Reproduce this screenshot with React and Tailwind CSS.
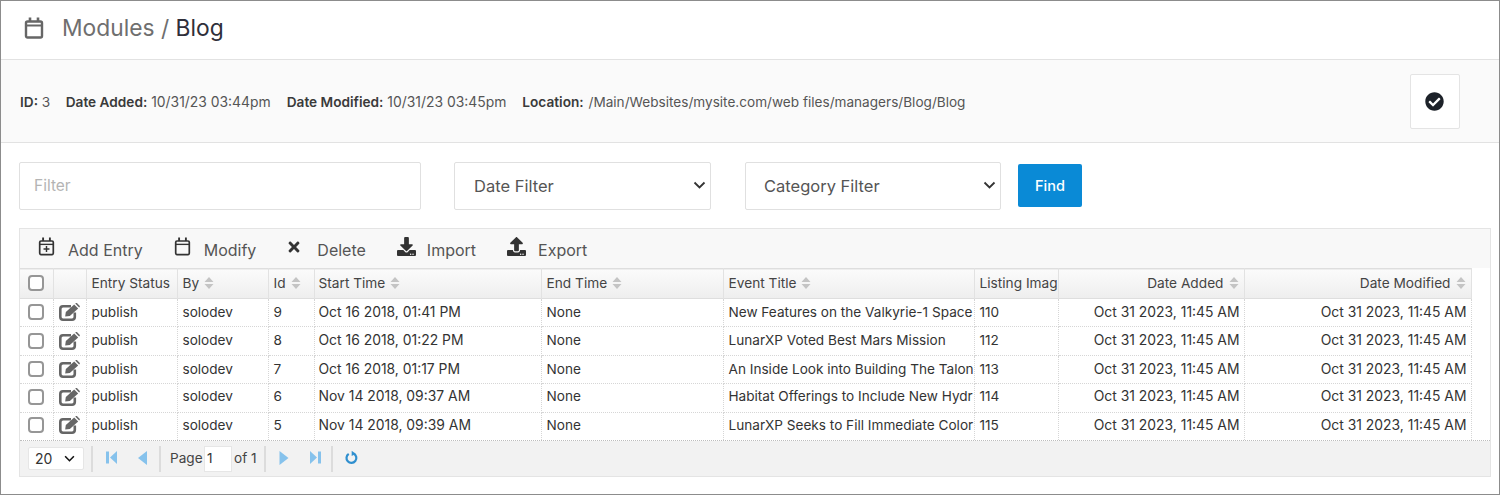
import React from "react";
import { FaCheckCircle, FaTimes, FaDownload, FaUpload } from "react-icons/fa";

const Cal = ({ plus, className, sw = 2.4 }) => (
  <svg viewBox="0 0 20 22" className={className} fill="none" stroke="currentColor" strokeWidth={sw}>
    <rect x="2" y="4.5" width="16" height="16" rx="1.5" />
    <path d="M2 8.5h16" strokeWidth={sw - 0.4} />
    <path d="M6 0.5v4M14 0.5v4" strokeWidth={sw + 0.2} />
    {plus && <path d="M10 10.5v7M6.5 14h7" strokeWidth="1.7" />}
  </svg>
);

const EditIcon = () => (
  <svg viewBox="0 0 21 18" className="w-[21px] h-[18px] block text-[#666]" fill="currentColor">
    <path d="M12 3.2H4A2.8 2.8 0 0 0 1.3 6V14A2.8 2.8 0 0 0 4 16.7h9a2.8 2.8 0 0 0 2.8-2.7V9.5" fill="none" stroke="currentColor" strokeWidth="2.6" />
    <path d="M6.2 13.4l.6-4.4 8.4-7.6 4 4-8.4 7.6z" />
    <path d="M16.2.6l.9-.6h.8l2.9 2.9v.8l-.7.8z" />
  </svg>
);

const Sort = () => (
  <svg viewBox="0 0 10 12" className="w-[10px] h-[12px] inline-block ml-[5px] align-[-1px] text-[#c4c4c4]" fill="currentColor">
    <path d="M5 0l4.5 5h-9zM5 12L.5 7h9z" />
  </svg>
);

const Chevron = ({ cls = "w-[13px] h-[8px] -mt-[1px] text-[#333]" }) => (
  <svg viewBox="0 0 12 8" className={cls} fill="none" stroke="currentColor" strokeWidth="1.8">
    <path d="M1 1.5l5 5 5-5" />
  </svg>
);

const Box = () => <span className="block w-4 h-4 border-2 border-[#969696] rounded-[4px] bg-white mx-auto" />;

const Sep = ({ ml }) => <span className={`w-[2px] h-[26px] bg-[#dcdcdc] ${ml}`} />;

const First = ({ flip, ml }) => (
  <svg viewBox="0 0 11 13" className={`w-[11px] h-[13px] -mt-[2px] text-[#86c2ec] ${ml} ${flip ? "-scale-x-100" : ""}`} fill="currentColor">
    <rect x="0" y="0.5" width="3" height="12" />
    <path d="M11 0v13L4 6.5z" />
  </svg>
);
const Prev = ({ flip, ml, w = "w-[9px]" }) => (
  <svg viewBox="0 0 9 14" className={`${w} h-[14px] -mt-[2px] text-[#86c2ec] ${ml} ${flip ? "-scale-x-100" : ""}`} fill="currentColor">
    <path d="M9 0v14L0 7z" />
  </svg>
);
const Refresh = ({ ml }) => (
  <svg viewBox="0 0 14 15" className={`w-[13px] h-[15px] -mt-[2px] text-[#2f8fcf] ${ml}`} fill="none" stroke="currentColor" strokeWidth="2.4">
    <path d="M9.5 3.4A5.3 5.3 0 1 1 4 3.6" />
    <path d="M7.2 0.2L11.6 3.4 7.2 5.8z" fill="currentColor" stroke="none" />
  </svg>
);

const cols = [33, 33, 91, 91, 46, 227, 182, 251, 84, 186, 227];
const heads = [
  ["Entry Status", false, ""],
  ["By", true, ""],
  ["Id", true, ""],
  ["Start Time", true, "!pl-[4px]"],
  ["End Time", true, ""],
  ["Event Title", true, ""],
  ["Listing Imag", false, ""],
];
const rows = [
  ["9", "Oct 16 2018, 01:41 PM", "New Features on the Valkyrie-1 Space", "110", "h-[28px]", "pb-[1px]"],
  ["8", "Oct 16 2018, 01:22 PM", "LunarXP Voted Best Mars Mission", "112", "h-[29px]", "pb-[1px]"],
  ["7", "Oct 16 2018, 01:17 PM", "An Inside Look into Building The Talon", "113", "h-[28px]", "pb-[1px]"],
  ["6", "Nov 14 2018, 09:37 AM", "Habitat Offerings to Include New Hydr", "114", "h-[29px]", "pb-[3px]"],
  ["5", "Nov 14 2018, 09:39 AM", "LunarXP Seeks to Fill Immediate Color", "115", "h-[29px]", "pb-[4px]"],
];
const hCell = "border-r border-[#e2e2e2] px-[5px] pb-[1px] font-normal text-left whitespace-nowrap overflow-hidden";
const cell = "border-r border-b border-dotted border-[#d6d6d6] px-[5px] whitespace-nowrap overflow-hidden";
const dateCell = "text-right text-[13.9px] !pr-[4px]";

const Action = ({ icon, label, gap, ml }) => (
  <div className={`flex items-center ${gap} ${ml}`}>
    {icon}
    <span className="text-[16px] leading-none text-[#555] mt-[3px]">{label}</span>
  </div>
);

const Select = ({ label, w, pl }) => (
  <div className={`${w} ${pl} h-[48px] border border-[#e0e0e0] rounded-[2px] bg-white flex items-center justify-between pr-[3px] text-[16.5px] text-[#555]`}>
    <span className="mt-[1px]">{label}</span>
    <span className="mr-[1px] flex"><Chevron /></span>
  </div>
);

const D = ({ children }) => <span className="text-[13.9px]">{children}</span>;
const B = ({ children, ml }) => <b className={`font-semibold text-[#3a3a3a] ${ml}`}>{children}</b>;

export default function App() {
  return (
    <div className="w-[1500px] h-[495px] border border-[#8c8c8c] bg-white overflow-hidden font-['Inter',sans-serif] text-[#333]">
      <header className="h-[59px] border-b border-[#e2e2e2] flex items-center pl-[23px] pb-[5px]">
        <Cal className="w-[20px] h-[22px] text-[#666]" />
        <h1 className="ml-[18px] mt-[2px] text-[22.8px] leading-none text-[#6f6f6f]">
          Modules / <span className="text-[#2f2f3a]">Blog</span>
        </h1>
      </header>

      <section className="h-[83px] bg-[#fafafa] border-b border-[#e2e2e2] flex items-center pl-[19px] text-[13.65px] text-[#555]">
        <p className="mt-[2px]">
          <B>ID:</B> 3
          <B ml="ml-[15.5px]">Date Added:</B> <D>10/31/23 03:44pm</D>
          <B ml="ml-[16px]">Date Modified:</B> <D>10/31/23 03:45pm</D>
          <B ml="ml-[16px]">Location:</B> <span className="text-[13.6px] ml-[1px]">/Main/Websites/mysite.com/web files/managers/Blog/Blog</span>
        </p>
        <div className="ml-auto mr-[39px] w-[50px] h-[55px] bg-white border border-[#e4e4e4] rounded-[2px] flex items-center justify-center">
          <FaCheckCircle className="text-[19px] text-[#1d2229] -ml-[1px]" />
        </div>
      </section>

      <div className="flex items-center h-[85px] pl-[18px]">
        <div className="w-[402px] h-[48px] border border-[#e0e0e0] rounded-[2px] flex items-center pl-[14px] text-[15.5px] text-[#b4b4b4]"><span className="mt-[1px]">Filter</span></div>
        <div className="ml-[33px]"><Select label="Date Filter" w="w-[257px]" pl="pl-[19px]" /></div>
        <div className="ml-[34px]"><Select label="Category Filter" w="w-[256px]" pl="pl-[18px]" /></div>
        <button className="ml-[17px] w-[64px] h-[43px] bg-[#0a8ad6] rounded-[2px] text-white text-[14.5px] font-medium">Find</button>
      </div>

      <div className="ml-[18px] w-[1472px] border border-[#e4e4e4]">
        <div className="h-[39px] bg-[#f8f8f8] flex items-center pl-[18px]">
          <Action icon={<Cal plus sw={2} className="w-[17px] h-[19px] text-[#333] -mt-[4px]" />} label="Add Entry" gap="gap-[13px]" ml="" />
          <Action icon={<Cal sw={2} className="w-[17px] h-[19px] text-[#333] -mt-[4px]" />} label="Modify" gap="gap-[13px]" ml="ml-[31px]" />
          <Action icon={<FaTimes className="text-[16px] text-[#333] -mt-[4px]" />} label="Delete" gap="gap-[15px]" ml="ml-[30px]" />
          <Action icon={<FaDownload className="text-[19px] text-[#333] -mt-[4px]" />} label="Import" gap="gap-[11px]" ml="ml-[31px]" />
          <Action icon={<FaUpload className="text-[19px] text-[#333] -mt-[4px]" />} label="Export" gap="gap-[12px]" ml="ml-[31px]" />
        </div>

        <div className="h-[173px] overflow-hidden border-b border-dotted border-[#bdbdbd]">
          <table className="table-fixed border-collapse w-[1451px] text-[13.6px] text-[#333]">
            <colgroup>
              {cols.map((c, i) => <col key={i} style={{ width: c }} />)}
            </colgroup>
            <thead>
              <tr className="h-[30px] bg-gradient-to-b from-[#fbfbfb] to-[#eeeeee] border-y border-[#dedede] text-[13.7px] text-[#444]">
                <th className={hCell}><Box /></th>
                <th className={hCell}></th>
                {heads.map(([h, s, extra]) => (
                  <th key={h} className={`${hCell} ${extra}`}>{h}{s && <Sort />}</th>
                ))}
                <th className={`${hCell} !text-right`}>Date Added<Sort /></th>
                <th className={`${hCell} !text-right`}>Date Modified<Sort /></th>
              </tr>
            </thead>
            <tbody>
              {rows.map((r) => (
                <tr key={r[0]} className={r[4]}>
                  <td className={`${cell} ${r[5]}`}><Box /></td>
                  <td className={`${cell} ${r[5]}`}><EditIcon /></td>
                  <td className={`${cell} ${r[5]}`}>publish</td>
                  <td className={`${cell} ${r[5]}`}>solodev</td>
                  <td className={`${cell} ${r[5]}`}>{r[0]}</td>
                  <td className={`${cell} ${r[5]} text-[13.9px] !pl-[4px]`}>{r[1]}</td>
                  <td className={`${cell} ${r[5]}`}>None</td>
                  <td className={`${cell} ${r[5]}`}>{r[2]}</td>
                  <td className={`${cell} ${r[5]}`}>{r[3]}</td>
                  <td className={`${cell} ${r[5]} ${dateCell}`}>Oct 31 2023, 11:45 AM</td>
                  <td className={`${cell} ${r[5]} ${dateCell}`}>Oct 31 2023, 11:45 AM</td>
                </tr>
              ))}
            </tbody>
          </table>
        </div>

        <div className="h-[35px] bg-[#f2f2f2] flex items-center pl-[8px] text-[13.6px] text-[#444]">
          <div className="w-[56px] h-[23px] bg-white border border-[#e6e6e6] rounded-[2px] flex items-center justify-between pl-[6px] pr-[8px] text-[14px] text-[#333]">
            <span>20</span><Chevron cls="w-[11px] h-[7px] text-[#111]" />
          </div>
          <Sep ml="ml-[7px]" />
          <First ml="ml-[13px]" />
          <Prev ml="ml-[21px]" />
          <Sep ml="ml-[12px]" />
          <span className="ml-[9px] w-[31px]">Page</span>
          <span className="ml-[3px] w-[28px] h-[26px] bg-white border border-[#e6e6e6] flex items-center pl-[2px] text-[#333]">1</span>
          <span className="ml-[2px] w-[23px] whitespace-nowrap">of 1</span>
          <Sep ml="ml-[7px]" />
          <Prev flip ml="ml-[13px]" w="w-[10px]" />
          <First flip ml="ml-[21px]" />
          <Sep ml="ml-[10px]" />
          <Refresh ml="ml-[12px]" />
        </div>
      </div>
    </div>
  );
}
